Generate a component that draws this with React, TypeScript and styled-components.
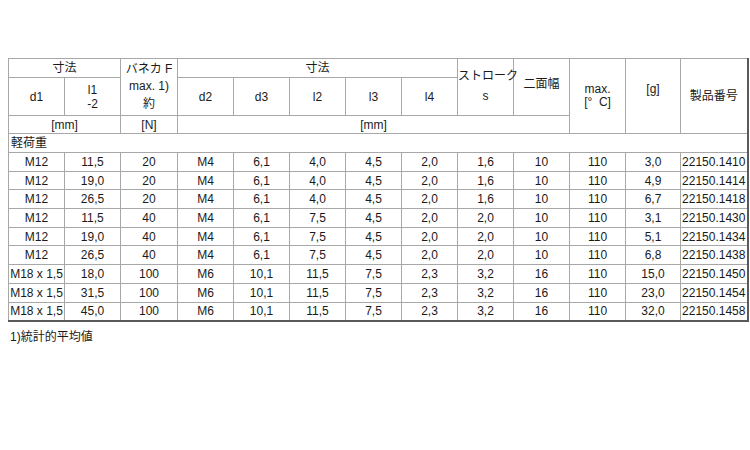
import * as React from 'react';
import styled, { createGlobalStyle } from 'styled-components';

const GlobalStyle = createGlobalStyle`
  html, body {
    margin: 0;
    padding: 0;
    background: #ffffff;
  }
  body {
    font-family: 'Liberation Sans', 'Noto Sans CJK JP', sans-serif;
    font-size: 12px;
    color: #1a1a1a;
  }
`;

const Page = styled.div`
  width: 750px;
  height: 450px;
  padding: 58px 0 0 8px;
  box-sizing: border-box;
`;

const Sheet = styled.table`
  border-collapse: collapse;
  table-layout: fixed;
  width: 740px;
  border-top: 1px solid #8c8c8c;
  border-left: 1px solid #8c8c8c;
  border-right: 2px solid #5a5a5a;
  border-bottom: 2px solid #5a5a5a;
`;

const Row = styled.tr<{ $h: number }>`
  height: ${(p) => p.$h}px;
`;

const HeadCell = styled.td<{ $lh?: number; $pb?: number }>`
  border: 1px solid #a8a8a8;
  padding: 0 0 ${(p) => p.$pb ?? 0}px 0;
  text-align: center;
  vertical-align: middle;
  line-height: ${(p) => p.$lh ?? 14}px;
  white-space: nowrap;
  overflow: visible;
`;

const SectionCell = styled.td`
  border: 1px solid #a8a8a8;
  padding: 0 0 0 2px;
  text-align: left;
  vertical-align: middle;
  line-height: 14px;
`;

const BodyCell = styled.td<{ $left?: boolean }>`
  border: 1px solid #a8a8a8;
  padding: ${(p) => (p.$left ? '0 0 0 1px' : '0')};
  text-align: ${(p) => (p.$left ? 'left' : 'center')};
  vertical-align: middle;
  line-height: 14px;
  white-space: nowrap;
`;

const Footnote = styled.p`
  margin: 8px 0 0 2px;
  line-height: 14px;
`;

const widths = [56, 56, 57, 56, 56, 56, 56, 56, 56, 56, 56, 55, 67];

const rows = [
  ['M12', '11,5', '20', 'M4', '6,1', '4,0', '4,5', '2,0', '1,6', '10', '110', '3,0', '22150.1410'],
  ['M12', '19,0', '20', 'M4', '6,1', '4,0', '4,5', '2,0', '1,6', '10', '110', '4,9', '22150.1414'],
  ['M12', '26,5', '20', 'M4', '6,1', '4,0', '4,5', '2,0', '1,6', '10', '110', '6,7', '22150.1418'],
  ['M12', '11,5', '40', 'M4', '6,1', '7,5', '4,5', '2,0', '2,0', '10', '110', '3,1', '22150.1430'],
  ['M12', '19,0', '40', 'M4', '6,1', '7,5', '4,5', '2,0', '2,0', '10', '110', '5,1', '22150.1434'],
  ['M12', '26,5', '40', 'M4', '6,1', '7,5', '4,5', '2,0', '2,0', '10', '110', '6,8', '22150.1438'],
  ['M18 x 1,5', '18,0', '100', 'M6', '10,1', '11,5', '7,5', '2,3', '3,2', '16', '110', '15,0', '22150.1450'],
  ['M18 x 1,5', '31,5', '100', 'M6', '10,1', '11,5', '7,5', '2,3', '3,2', '16', '110', '23,0', '22150.1454'],
  ['M18 x 1,5', '45,0', '100', 'M6', '10,1', '11,5', '7,5', '2,3', '3,2', '16', '110', '32,0', '22150.1458'],
];

const App = () => {
  return (
    <Page>
      <GlobalStyle />
      <Sheet>
        <colgroup>
          {widths.map((w, i) => (
            <col key={i} style={{ width: w }} />
          ))}
        </colgroup>
        <tbody>
          <Row $h={19}>
            <HeadCell colSpan={2}>寸法</HeadCell>
            <HeadCell rowSpan={2} $lh={17.5}>
              バネカ F
              <br />
              max. 1)
              <br />約
            </HeadCell>
            <HeadCell colSpan={5}>寸法</HeadCell>
            <HeadCell rowSpan={2} $lh={20} $pb={2}>
              ストローク
              <br />s
            </HeadCell>
            <HeadCell rowSpan={2} $pb={6}>
              二面幅
            </HeadCell>
            <HeadCell rowSpan={3} $lh={13}>
              max.
              <br />[°&nbsp; C]
            </HeadCell>
            <HeadCell rowSpan={3} $pb={14}>
              [g]
            </HeadCell>
            <HeadCell rowSpan={3}>製品番号</HeadCell>
          </Row>
          <Row $h={38}>
            <HeadCell>d1</HeadCell>
            <HeadCell>
              l1
              <br />
              -2
            </HeadCell>
            <HeadCell>d2</HeadCell>
            <HeadCell>d3</HeadCell>
            <HeadCell>l2</HeadCell>
            <HeadCell>l3</HeadCell>
            <HeadCell>l4</HeadCell>
          </Row>
          <Row $h={18}>
            <HeadCell colSpan={2}>[mm]</HeadCell>
            <HeadCell>[N]</HeadCell>
            <HeadCell colSpan={7}>[mm]</HeadCell>
          </Row>
          <Row $h={19}>
            <SectionCell colSpan={13}>軽荷重</SectionCell>
          </Row>
          {rows.map((r, i) => (
            <Row key={i} $h={18.7}>
              {r.map((v, j) => (
                <BodyCell key={j} $left={j === 12}>
                  {v}
                </BodyCell>
              ))}
            </Row>
          ))}
        </tbody>
      </Sheet>
      <Footnote>1)統計的平均値</Footnote>
    </Page>
  );
};

export default App;
